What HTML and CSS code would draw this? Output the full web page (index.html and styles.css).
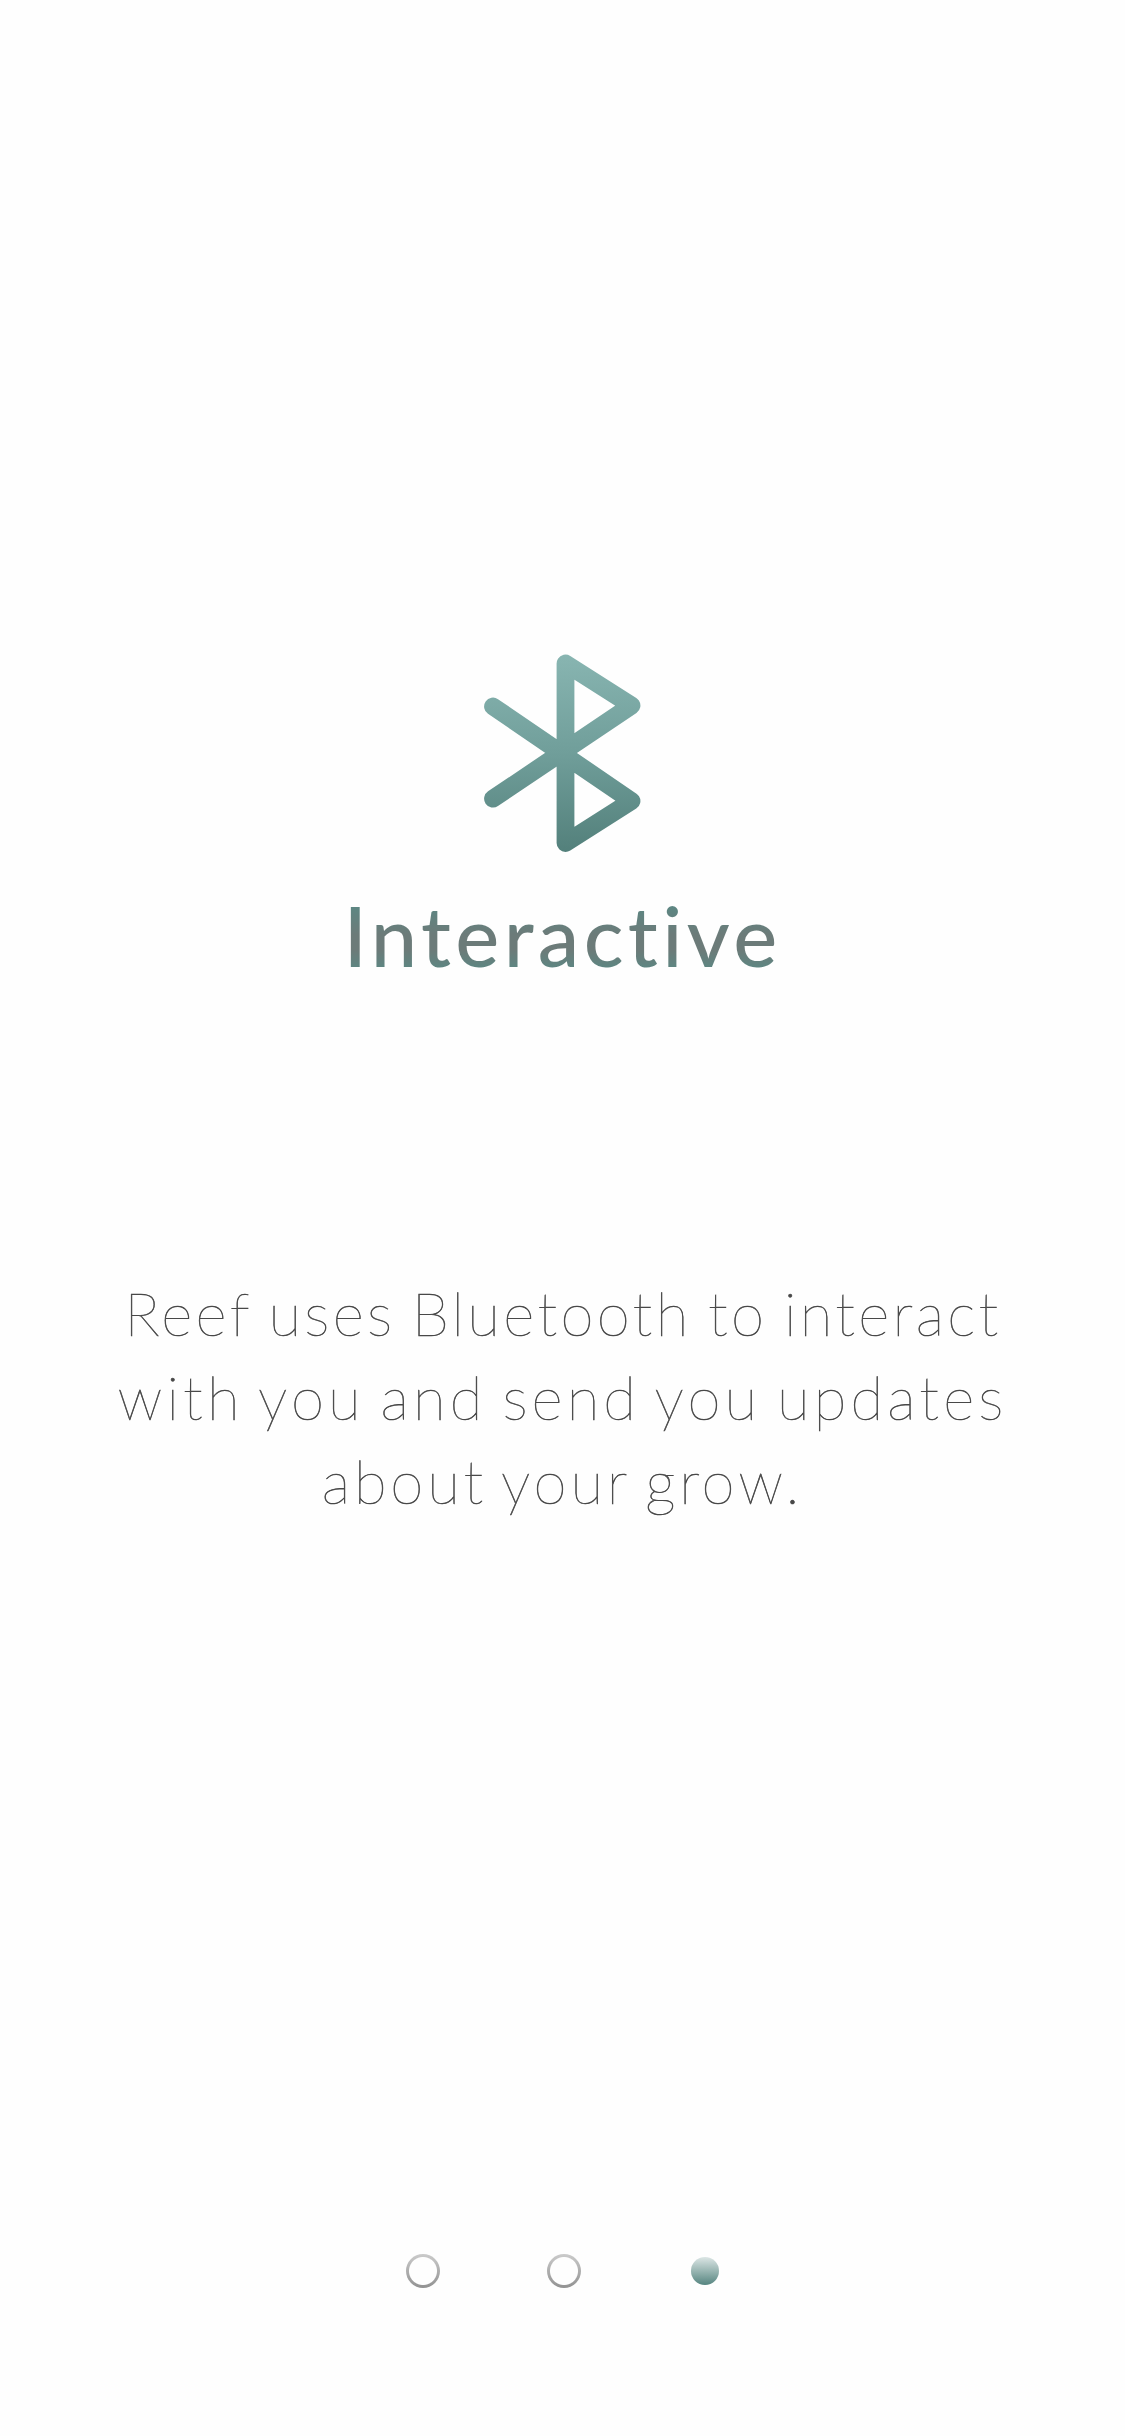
FILE: index.html
```html
<!DOCTYPE html>
<html lang="en">
<head>
<meta charset="utf-8">
<title>Interactive</title>
<link rel="stylesheet" href="styles.css">
</head>
<body>
<main class="screen">
  <svg class="icon" width="190" height="230" viewBox="470 640 190 230" aria-hidden="true">
    <defs>
      <linearGradient id="teal" gradientUnits="userSpaceOnUse" x1="560" y1="655" x2="568" y2="852">
        <stop offset="0" stop-color="#88b5b1"/>
        <stop offset="0.5" stop-color="#709e9a"/>
        <stop offset="1" stop-color="#53807b"/>
      </linearGradient>
    </defs>
    <path d="M493 798.7 L631.5 705.5 L565.5 663.5 V843 L631.5 801 L493 706.5" fill="none" stroke="url(#teal)" stroke-width="17.8" stroke-linecap="round" stroke-linejoin="round"/>
  </svg>
  <h1 class="title">Interactive</h1>
  <p class="copy">
    <span class="line line-first">Reef uses Bluetooth to interact</span>
    <span class="line line-second">with you and send you updates</span>
    <span class="line line-third">about your grow.</span>
  </p>
  <nav class="pager" aria-label="Pages">
    <span class="dot"></span>
    <span class="dot"></span>
    <span class="dot dot-active"></span>
  </nav>
</main>
</body>
</html>
```
FILE: styles.css
```css
body {
  margin: 0;
  background: #fefefe;
  font-family: Lato, "Open Sans", sans-serif;
}

.screen {
  box-sizing: border-box;
  height: 2436px;
  padding: 640px 0 148px;
  display: flex;
  flex-direction: column;
  align-items: center;
}

.icon {
  flex: none;
  margin-left: 5px;
}

.title {
  margin: 15px 0 0;
  font-size: 83px;
  line-height: 100px;
  font-weight: 500;
  letter-spacing: 4.4px;
  white-space: nowrap;
  color: transparent;
  background: linear-gradient(#5c8783 20%, #6c7b79 50%, #6c7b79 65%, #5c8783 85%);
  background-clip: text;
  -webkit-background-clip: text;
}

.copy {
  margin: 286px 0 0;
  display: flex;
  flex-direction: column;
  align-items: center;
  font-size: 60px;
  line-height: 84px;
  font-weight: 100;
  color: #484848;
  -webkit-text-stroke: 0.6px #484848;
}

.line {
  white-space: nowrap;
}

.line-first {
  padding-left: 1px;
  letter-spacing: 3.3px;
  word-spacing: -3.9px;
}

.line-second {
  letter-spacing: 4.1px;
  word-spacing: -5.3px;
}

.line-third {
  letter-spacing: 3.8px;
  word-spacing: -5.5px;
}

.pager {
  margin: auto 0 0 3px;
  display: flex;
  align-items: center;
  gap: 107px;
}

.dot {
  box-sizing: border-box;
  width: 34px;
  height: 34px;
  border-radius: 50%;
  background: radial-gradient(circle, #fefefe 13.5px, transparent 14.5px), linear-gradient(#cbcbcb, #929292);
}

.dot-active {
  border: 3.5px solid transparent;
  background: linear-gradient(#dce6e5, #568580) padding-box;
}
```
